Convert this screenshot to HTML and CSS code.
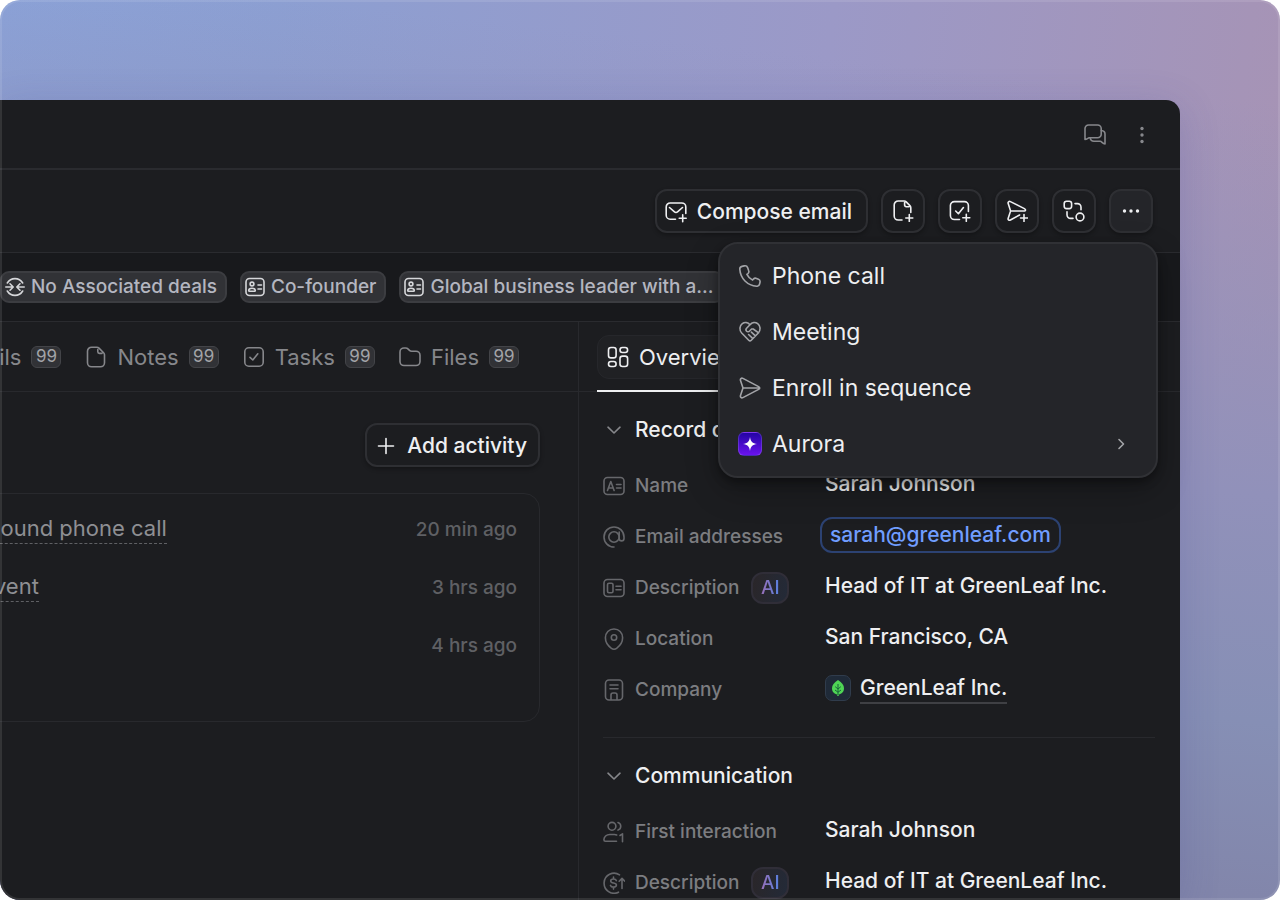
FILE: index.html
```html
<!DOCTYPE html>
<html lang="en">
    <head>
        <meta charset="utf-8">
        <title>Sarah Johnson</title>
        <link rel="stylesheet" href="styles.css">
    </head>
    <body>
    <!-- Icons used more than once -->
    <svg class="sprite" aria-hidden="true">
        <symbol id="card" viewBox="0 0 20 20">
            <rect x="1" y="1.5" width="18" height="17" rx="3.5"/>
            <circle cx="7" cy="7" r="1.9"/>
            <path d="M3.7 13.6c0-1.6 1.4-2.4 3.3-2.4s3.3.8 3.3 2.4c0 .5-.3.7-.8.7h-5c-.5 0-.8-.2-.8-.7zM13 8h3.500M13 12h3.500"/>
        </symbol>
        <symbol id="down" viewBox="0 0 22 22">
            <path d="M5 8.2l6 5.800 6-5.800"/>
        </symbol>
    </svg>

    <div class="stage">
    <div class="window">
        <header class="titlebar">
            <button class="plain" aria-label="Comments">
                <svg class="icon" viewBox="0 0 22 22"><path d="M1 15.500V4.600a3.600 3.600 0 0 1 3.600-3.600h9a3.600 3.600 0 0 1 3.600 3.600v5.600a3.600 3.600 0 0 1-3.600 3.600H5.200c-1.400 0-2.200 1.700-4.200 1.700z"/><path d="M6.200 14c.3 2 1.700 3.300 3.700 3.300h6.300c1.600 0 2.300 2.700 4.800 2.700V10c0-1.800-1.200-3.200-3.700-3.500"/></svg>
            </button>
            <button class="plain" aria-label="Options">
                <svg class="icon dots" viewBox="0 0 22 22"><circle cx="11" cy="4.500" r="1.700"/><circle cx="11" cy="11" r="1.700"/><circle cx="11" cy="17.500" r="1.700"/></svg>
            </button>
        </header>

        <div class="actions">
            <button class="btn">
                <svg class="icon" viewBox="0 0 22 22"><path d="M10.500 18.200H5.200a4 4 0 0 1-4-4V6a4 4 0 0 1 4-4h11.600a4 4 0 0 1 4 4v6.500M4.500 6.500l4.700 4.200a2.700 2.700 0 0 0 3.600 0l4.700-4.200M17.700 13.800v7M14.200 17.300h7"/></svg>
                Compose email
            </button>
            <button class="btn square" aria-label="Add note">
                <svg class="icon" viewBox="0 0 22 22"><path d="M10 20H6.200a4 4 0 0 1-4-4V5a4 4 0 0 1 4-4h5.900a3 3 0 0 1 2.100.9l3.700 3.700a3 3 0 0 1 .9 2.100v4.800M12.600 2.500v2.600a1.600 1.600 0 0 0 1.600 1.600h2.800M17.300 14.500v7M13.800 18h7"/></svg>
            </button>
            <button class="btn square" aria-label="Add task">
                <svg class="icon" viewBox="0 0 22 22"><path d="M10.500 19.500H5.400a4 4 0 0 1-4-4V5.600a4 4 0 0 1 4-4h10a4 4 0 0 1 4 4v5.900M6.700 11l2.700 2.700 5-6.200M17.300 14.300v7M13.800 17.800h7"/></svg>
            </button>
            <button class="btn square" aria-label="Add to sequence">
                <svg class="icon" viewBox="0 0 22 22"><path d="M13.600 15l-9.200 5c-1.500.8-2.700-.3-2.200-1.800L4.600 11 2.200 3.600c-.5-1.500.8-2.700 2.200-2l14 7c1.500.8 1.500 2.200.2 2.400H4.600M18 14.500v7M14.500 18h7"/></svg>
            </button>
            <button class="btn square" aria-label="Run workflow">
                <svg class="icon" viewBox="0 0 22 22"><rect x="1.200" y="1.200" width="7.400" height="7.400" rx="2.300"/><circle cx="17" cy="17" r="3.900"/><path d="M12 3.600h2.400a3.600 3.600 0 0 1 3.600 3.600v2.600M4 11.800v3a3.600 3.600 0 0 0 3.600 3.600H10"/></svg>
            </button>
            <div class="more">
                <button class="btn square open" aria-label="More actions" aria-expanded="true">
                    <svg class="icon dots" viewBox="0 0 22 22"><circle cx="4.500" cy="11" r="1.700"/><circle cx="11" cy="11" r="1.700"/><circle cx="17.500" cy="11" r="1.700"/></svg>
                </button>
                <div class="menu" role="menu">
                    <button class="item" role="menuitem">
                        <svg class="icon" viewBox="0 0 22 22"><path d="M5.200.9 3 1.400C1.600 1.700.7 2.900.8 4.300 1.400 13.600 8.400 20.600 17.700 21.200c1.400.1 2.600-.8 2.900-2.200l.4-1.700c.3-1.300-.3-2.500-1.500-3l-2-.9c-1.100-.5-2.300-.2-3.100.7l-.8 1c-2.500-1.200-4.500-3.200-5.700-5.700l1-.8c.9-.8 1.200-2 .7-3.100l-1-2.900C8.100 1.300 6.700.6 5.200.9z"/></svg>
                        Phone call
                    </button>
                    <button class="item" role="menuitem">
                        <svg class="icon" viewBox="0 0 22 22"><path d="M11 3.800C9 1.300 5.700.9 3.300 2.700.3 5 .2 9.200 2.700 12l7 7.300c.8.800 1.800.8 2.600 0l7-7.300c2.500-2.800 2.400-7-.6-9.300C16.300.9 13 1.300 11 3.800zM11 3.800 7.600 7.300c-.8.900-.8 2.100 0 2.900s2 .8 2.800 0L12.600 8h1.600l5.400 3.800M12.400 11.200l4 3.700M9.600 13.500l3.800 3.600"/></svg>
                        Meeting
                    </button>
                    <button class="item" role="menuitem">
                        <svg class="icon" viewBox="0 0 22 22"><path d="M1.500 3.500c-.5-1.600.9-2.900 2.400-2.100l15.700 8.200c1.500.8 1.500 2 0 2.800L3.900 20.600c-1.500.8-2.900-.5-2.400-2.100L4 11zM4 11h16"/></svg>
                        Enroll in sequence
                    </button>
                    <button class="item" role="menuitem">
                        <span class="app-icon"><svg viewBox="0 0 14 14"><path d="M7 0c.6 4.500 2.500 6.400 7 7-4.500.6-6.400 2.500-7 7-.6-4.500-2.500-6.400-7-7 4.500-.6 6.400-2.500 7-7z"/></svg></span>
                        Aurora
                        <svg class="icon next" viewBox="0 0 22 22"><path d="M9 6.500l4.500 4.500L9 15.500"/></svg>
                    </button>
                </div>
            </div>
        </div>

        <div class="chips">
            <span class="chip">
                <svg class="icon" viewBox="0 0 20 20"><path d="M2.300 6a9 9 0 0 1 15.400 0M2.300 14a9 9 0 0 0 15.400 0M.8 10h7M5 6.800 8.200 10 5 13.200M19.200 10h-7M15 6.800 11.800 10l3.200 3.200"/></svg>
                No Associated deals
            </span>
            <span class="chip">
                <svg class="icon"><use href="#card"/></svg>
                Co-founder
            </span>
            <span class="chip">
                <svg class="icon"><use href="#card"/></svg>
                Global business leader with a...
            </span>
        </div>

        <main class="columns">
            <section class="activity">
                <nav class="tabs">
                    <a class="tab" href="#emails">Emails <span class="count">99</span></a>
                    <a class="tab" href="#notes">
                        <svg class="icon" viewBox="0 0 22 22"><path d="M2.500 5.200a4 4 0 0 1 4-4h5.400a3 3 0 0 1 2.100.9l4.600 4.600a3 3 0 0 1 .9 2.100v8a4 4 0 0 1-4 4h-9a4 4 0 0 1-4-4zM12.800 3.500v2.300a1.600 1.600 0 0 0 1.600 1.600h2.600"/></svg>
                        Notes <span class="count">99</span>
                    </a>
                    <a class="tab" href="#tasks">
                        <svg class="icon" viewBox="0 0 22 22"><rect x="1.800" y="1.800" width="18.400" height="18.400" rx="4"/><path d="M7 11.300l2.800 2.700 5-6.200"/></svg>
                        Tasks <span class="count">99</span>
                    </a>
                    <a class="tab" href="#files">
                        <svg class="icon" viewBox="0 0 22 22"><path d="M1 6a4 4 0 0 1 4-4h1.600c1 0 1.900.4 2.600 1.100l1 1c.7.700 1.600 1.100 2.600 1.100H17a4 4 0 0 1 4 4V15.500a4 4 0 0 1-4 4H5a4 4 0 0 1-4-4z"/></svg>
                        Files <span class="count">99</span>
                    </a>
                </nav>
                <div class="toolbar">
                    <button class="btn add">
                        <svg class="icon" viewBox="0 0 22 22"><path d="M11 3.500v15M3.500 11h15"/></svg>
                        Add activity
                    </button>
                </div>
                <ul class="feed">
                    <li><a href="#call">Outbound phone call</a> <time>20 min ago</time></li>
                    <li><a href="#event">an event</a> <time>3 hrs ago</time></li>
                    <li><time>4 hrs ago</time></li>
                </ul>
            </section>

            <aside class="details">
                <nav class="tabs">
                    <a class="tab current" href="#overview">
                        <svg class="icon" viewBox="0 0 22 22"><rect x="1.500" y="1.500" width="7.600" height="10.400" rx="2.500"/><rect x="13" y="1.500" width="7.600" height="5" rx="2.400"/><rect x="1.500" y="15.500" width="7.600" height="5" rx="2.400"/><rect x="13" y="10.100" width="7.600" height="10.400" rx="2.500"/></svg>
                        Overview
                    </a>
                </nav>

                <section class="group">
                    <h2><button class="toggle"><svg class="icon"><use href="#down"/></svg>Record details</button></h2>
                    <dl>
                        <div class="row">
                            <dt><svg class="icon" viewBox="0 0 22 22"><rect x="1" y="2.500" width="20" height="17" rx="3.500"/><path d="M4.500 15.500 7.800 6.500l3.300 9M5.500 13h4.600M13.500 9.500h4.500M13.500 13h4.500"/></svg>Name</dt>
                            <dd>Sarah Johnson</dd>
                        </div>
                        <div class="row">
                            <dt><svg class="icon" viewBox="0 0 22 22"><circle cx="11" cy="11" r="5.200"/><path d="M16.200 6v6.500a2.400 2.400 0 0 0 4.800 0V11a10 10 0 1 0-10 10"/></svg>Email addresses</dt>
                            <dd><a class="email" href="mailto:sarah@greenleaf.com">sarah@greenleaf.com</a></dd>
                        </div>
                        <div class="row">
                            <dt><svg class="icon" viewBox="0 0 22 22"><rect x="1" y="2.500" width="20" height="17" rx="3.500"/><rect x="4.500" y="6.300" width="5.500" height="9.400" rx="1.500"/><path d="M13 9.200h5M13 12.800h5"/></svg>Description <span class="ai"><span>AI</span></span></dt>
                            <dd>Head of IT at GreenLeaf Inc.</dd>
                        </div>
                        <div class="row">
                            <dt><svg class="icon" viewBox="0 0 22 22"><path d="M11 1c5 0 8.600 3.800 8.600 8.800 0 4-2.800 8.200-6 10.500-1.600 1.100-3.600 1.100-5.200 0-3.200-2.300-6-6.500-6-10.500C2.400 4.800 6 1 11 1z"/><circle cx="11" cy="9.500" r="2.700"/></svg>Location</dt>
                            <dd>San Francisco, CA</dd>
                        </div>
                        <div class="row">
                            <dt><svg class="icon" viewBox="0 0 22 22"><rect x="2.500" y="1" width="17" height="20" rx="3.500"/><path d="M7 6h8M7 9.800h8M8 20.500v-4.500a2 2 0 0 1 2-2h2a2 2 0 0 1 2 2v4.500"/></svg>Company</dt>
                            <dd>
                                <span class="logo"><svg viewBox="0 0 12 16"><path fill="#4fd555" d="M6 0c4 2.500 6 5.200 6 8.300 0 3.600-2.400 5.700-5.300 6.300V16H5.300v-1.400C2.400 14 0 11.900 0 8.300 0 5.200 2 2.500 6 0z"/><path fill="none" stroke="#17643a" d="M6 4v11M6 9 3.200 6.700M6 9l2.800-2.300M6 12.200 3 10M6 12.200 9 10"/></svg></span>
                                <a class="company" href="#company">GreenLeaf Inc.</a>
                            </dd>
                        </div>
                    </dl>
                </section>

                <section class="group">
                    <h2><button class="toggle"><svg class="icon"><use href="#down"/></svg>Communication</button></h2>
                    <dl>
                        <div class="row">
                            <dt><svg class="icon" viewBox="0 0 22 22"><circle cx="9" cy="5.300" r="3.900"/><path d="M15 1.500a4 4 0 0 1 0 7.600M13.500 20.300H2.400c-.9 0-1.500-.6-1.500-1.500 0-3 2.500-5.300 6-5.300h4.600c1 0 1.500.2 2.200.5M17 14.500l2.500-1.700v7.900"/></svg>First interaction</dt>
                            <dd>Sarah Johnson</dd>
                        </div>
                        <div class="row">
                            <dt><svg class="icon" viewBox="0 0 22 22"><path d="M16.500 2.800A10 10 0 1 0 15.500 20.200M13.300 8.600c-.3-1-1.300-1.600-2.800-1.600-1.700 0-2.800.8-2.800 2 0 2.900 5.700 1.200 5.700 4.100 0 1.200-1.200 2-2.900 2-1.600 0-2.700-.7-3-1.700M10.500 5v2M10.500 15.100v2M19 16.500V6.500M16.200 9.200 19 6.400l2.800 2.800"/></svg>Description <span class="ai"><span>AI</span></span></dt>
                            <dd>Head of IT at GreenLeaf Inc.</dd>
                        </div>
                    </dl>
                </section>
            </aside>
        </main>
    </div>
    </div>
    </body>
</html>
```
FILE: styles.css
```css
*{
    box-sizing: border-box;
}
body{
    margin: 0;
    background: #fff;
    color: #eeeff1;
    font-family: Inter, "Liberation Sans", sans-serif;
    font-size: 21px;
    font-weight: 500;
    line-height: 28px;
}
button{
    font: inherit;
    color: inherit;
    background: none;
    border: 0;
    padding: 0;
}
a{
    color: inherit;
    text-decoration: none;
}
h2, dl, dd, ul{
    margin: 0;
    padding: 0;
    font: inherit;
}
.sprite{
    display: none;
}
.icon{
    width: 22px;
    height: 22px;
    flex: none;
    fill: none;
    stroke: currentColor;
    stroke-width: 1.6;
    stroke-linecap: round;
    stroke-linejoin: round;
}
.dots{
    fill: currentColor;
    stroke: none;
}

/* Backdrop */
.stage{
    position: relative;
    display: flex;
    height: 100vh;
    padding: 100px 100px 0 0;
    overflow: hidden;
    border-radius: 20px;
    background:
        linear-gradient(186deg, rgba(146, 146, 188, 0) 10%, #9191ba 48%, #868fb5 70%, #7f7fa3),
        linear-gradient(97deg, #8aa2d8, #8c9fd2 20%, #9b99c7 60%, #a793b4 96%);
}
.stage::after{
    content: "";
    position: absolute;
    inset: 0;
    border: 2px solid rgba(255, 255, 255, 0.1);
    border-radius: 20px;
    pointer-events: none;
}

/* Window */
.window{
    flex: 1;
    display: flex;
    flex-direction: column;
    min-width: 0;
    background: #1c1d20;
    border-radius: 0 14px 0 0;
    box-shadow: 0 8px 40px rgba(60, 60, 140, 0.2);
}
.titlebar{
    display: flex;
    flex: none;
    align-items: center;
    justify-content: flex-end;
    gap: 25px;
    height: 70px;
    padding: 2px 27px 0 0;
    border-bottom: 2px solid #2a2b2f;
    color: #86878b;
}
.plain{
    display: flex;
}
.actions{
    display: flex;
    flex: none;
    align-items: center;
    justify-content: flex-end;
    gap: 13px;
    height: 83px;
    padding-right: 27px;
    border-bottom: 1px solid #2a2b2f;
}
.btn{
    display: flex;
    align-items: center;
    justify-content: center;
    gap: 10px;
    height: 44px;
    padding: 2px 14px 0 8px;
    border: 2px solid #2e2f33;
    border-radius: 12px;
    background: #1c1d20;
    box-shadow: 0 2px 4px rgba(0, 0, 0, 0.3);
}
.square{
    width: 44px;
    padding: 0;
}
.open{
    background: #242529;
}

/* Dropdown menu */
.more{
    position: relative;
}
.menu{
    position: absolute;
    top: 53px;
    right: -5px;
    z-index: 1;
    width: 440px;
    padding: 4px 0;
    border: 2px solid #303135;
    border-radius: 20px;
    background: #242529;
    box-shadow: 0 4px 8px rgba(0, 0, 0, 0.35), 0 12px 32px rgba(0, 0, 0, 0.25);
}
.item{
    display: flex;
    align-items: center;
    gap: 10px;
    width: 100%;
    height: 56px;
    padding: 0 24px 0 18px;
    font-size: 23px;
    font-weight: 400;
}
.item .icon{
    width: 24px;
    color: #a3a4a8;
}
.item .next{
    width: 22px;
    margin-left: auto;
}
.app-icon{
    display: grid;
    place-items: center;
    width: 24px;
    height: 24px;
    border: 1px solid rgba(255, 255, 255, 0.15);
    border-radius: 6px;
    background: linear-gradient(#2404a4, #6a12ee);
}
.app-icon svg{
    width: 14px;
    fill: #fff;
}

/* Highlights */
.chips{
    display: flex;
    flex: none;
    align-items: center;
    gap: 13px;
    height: 69px;
    background: #18191c;
    border-bottom: 1px solid #2a2b2f;
    overflow: hidden;
}
.chip{
    display: flex;
    flex: none;
    align-items: center;
    gap: 6px;
    height: 32px;
    padding: 0 8px 0 3px;
    border: 2px solid #3c3d41;
    border-radius: 9px;
    background: #313236;
    color: #b4b6c0;
    font-size: 19px;
}
.chip .icon{
    width: 20px;
    height: 20px;
    color: #d6d7da;
}

/* Columns */
.columns{
    display: flex;
    flex: 1;
    min-height: 0;
    overflow: hidden;
}
.activity{
    flex: 1;
    min-width: 0;
    border-right: 1px solid #28292d;
}
.details{
    width: 601px;
}
.tabs{
    display: flex;
    align-items: center;
    height: 70px;
    border-bottom: 1px solid #28292d;
}
.activity .tabs{
    justify-content: flex-end;
    gap: 24px;
    padding-right: 59px;
    overflow: hidden;
}
.details .tabs{
    padding-left: 18px;
}
.tab{
    display: flex;
    align-items: center;
    gap: 10px;
    color: #86878b;
    font-size: 22px;
    font-weight: 400;
}
.count{
    width: 30px;
    height: 22px;
    border: 1px solid #434448;
    border-radius: 6px;
    background: #313236;
    color: #a3a4a8;
    font-size: 17px;
    line-height: 19px;
    text-align: center;
}
.current{
    position: relative;
    height: 44px;
    padding: 0 14px 0 9px;
    border: 1px solid #26272b;
    border-radius: 12px;
    background: #202124;
    color: #eeeff1;
}
.current::after{
    content: "";
    position: absolute;
    left: -1px;
    right: -1px;
    bottom: -14px;
    height: 2px;
    background: #eeeff1;
}

/* Activity feed */
.toolbar{
    display: flex;
    justify-content: flex-end;
    padding: 31px 38px 26px 0;
}
.add{
    padding: 2px 11px 0 8px;
}
.feed{
    height: 229px;
    margin: 0 38px 0 -73px;
    padding: 7px 22px 0;
    border: 1px solid #28292d;
    border-radius: 16px;
    list-style: none;
}
.feed li{
    display: flex;
    align-items: center;
    height: 58px;
    color: #8e8f93;
}
.feed a{
    padding-bottom: 3px;
    border-bottom: 1px dashed #5f6064;
    font-size: 22px;
    font-weight: 400;
    line-height: 24px;
}
.feed time{
    margin-left: auto;
    color: #5f6064;
    font-size: 19px;
}

/* Record properties */
.group{
    margin: 0 25px 0 24px;
    padding: 8px 0 22px;
    border-bottom: 1px solid #28292d;
}
.toggle{
    display: flex;
    align-items: center;
    gap: 10px;
    height: 60px;
}
.toggle .icon{
    color: #86878b;
}
.row{
    display: grid;
    grid-template-columns: 222px 1fr;
    align-items: center;
    height: 51px;
}
.row dt{
    display: flex;
    align-items: center;
    gap: 10px;
    color: #7c7d81;
    font-size: 19px;
}
.row dt .icon{
    color: #66676b;
}
.row dd{
    display: flex;
    align-items: center;
    gap: 9px;
    padding-bottom: 3px;
    white-space: nowrap;
}
.email{
    margin-left: -5px;
    padding: 2px 8px;
    border: 2px solid #2c4272;
    border-radius: 12px;
    color: #709dff;
}
.ai{
    display: grid;
    place-items: center;
    width: 38px;
    height: 32px;
    margin-left: 2px;
    border: 2px solid #302e38;
    border-radius: 12px;
    background: linear-gradient(100deg, #2a2629, #232a38);
}
.ai span{
    background: linear-gradient(90deg, #9a70b8, #5580e0);
    background-clip: text;
    color: transparent;
}
.logo{
    display: grid;
    place-items: center;
    width: 26px;
    height: 26px;
    border: 1px solid #303c4c;
    border-radius: 7px;
    background: #1f2a38;
}
.logo svg{
    width: 12px;
    height: 16px;
}
.company{
    padding-top: 2px;
    border-bottom: 2px solid #3f4044;
}
```
